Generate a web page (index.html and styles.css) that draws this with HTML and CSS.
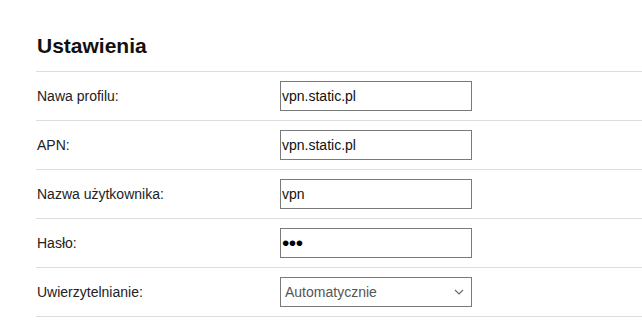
FILE: index.html
```html
<!DOCTYPE html>
<html lang="pl">
<head>
    <meta charset="UTF-8">
    <meta name="viewport" content="width=device-width, initial-scale=1.0">
    <title>Ustawienia</title>
    <link rel="stylesheet" href="styles.css">
</head>
<body>

    <div class="settings">
        <h1>Ustawienia</h1>

        <div class="row">
            <label for="profileName">Nawa profilu:</label>
            <input type="text" id="profileName" value="vpn.static.pl">
        </div>
        <div class="row">
            <label for="apn">APN:</label>
            <input type="text" id="apn" value="vpn.static.pl">
        </div>
        <div class="row">
            <label for="username">Nazwa użytkownika:</label>
            <input type="text" id="username" value="vpn">
        </div>
        <div class="row">
            <label for="password">Hasło:</label>
            <input type="password" id="password" value="vpn">
        </div>
        <div class="row">
            <label for="auth">Uwierzytelnianie:</label>
            <span class="select-wrap">
                <select id="auth">
                    <option>Automatycznie</option>
                    <option>PAP</option>
                    <option>CHAP</option>
                </select>
                <svg class="chevron" width="10" height="6" viewBox="0 0 10 6">
                    <path d="M1 1l4 4 4-4" fill="none" stroke="#666" stroke-width="1.1"/>
                </svg>
            </span>
        </div>
    </div>

</body>
</html>
```

FILE: styles.css
```css
body {
    margin: 0;
    font-family: "Liberation Sans", Arial, sans-serif;
    background-color: #fff;
    color: #222;
}
.settings {
    padding: 34px 0 0 36px;
}
h1 {
    margin: 0;
    padding: 0 0 13px 1px;
    font-size: 21px;
    line-height: 24px;
    font-weight: bold;
    color: #111;
    border-bottom: 1px solid #ddd;
}
.row {
    display: flex;
    align-items: center;
    height: 48px;
    border-bottom: 1px solid #ddd;
}
.row label {
    width: 243px;
    padding-left: 1px;
    font-size: 14px;
    color: #222;
}
input, select {
    width: 192px;
    height: 30px;
    margin: 0;
    padding: 0 1px;
    box-sizing: border-box;
    border: 1px solid #7a7a7a;
    border-radius: 0;
    background: #fff;
    font-family: "Liberation Sans", Arial, sans-serif;
    font-size: 14px;
    color: #111;
    outline: none;
}
input[type="password"] {
    font-size: 21px;
    letter-spacing: -0.5px;
    color: #000;
}
.select-wrap {
    position: relative;
    display: inline-block;
}
select {
    -webkit-appearance: none;
    appearance: none;
    padding-left: 4px;
    color: #555;
}
.chevron {
    position: absolute;
    right: 8px;
    top: 12px;
    pointer-events: none;
}
```
